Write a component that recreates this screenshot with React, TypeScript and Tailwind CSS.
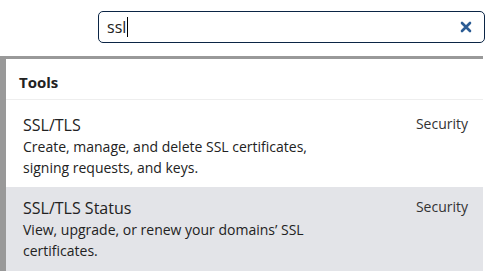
export default function App() {
  return (
    <div className="h-[271px] w-[485px] overflow-hidden bg-white font-['Open_Sans',sans-serif] text-[#222]">
      {/* Search */}
      <div className="flex h-[56px] items-start pl-[98px] pt-[11px]">
        <div className="flex h-[32px] flex-1 items-center rounded-[5px] border border-[#0b2545] pl-[8px] pr-[10px]">
          <span className="text-[16px] leading-none text-[#222]">ssl</span>
          <span className="ml-px h-[20px] w-px bg-black" />
          <span className="flex-1" />
          <svg width="12" height="12" viewBox="0 0 12 12" className="mr-[2px]">
            <path d="M2 2L10 10M10 2L2 10" stroke="#2c5c94" strokeWidth="2.6" strokeLinecap="round" />
          </svg>
        </div>
      </div>

      {/* Results panel */}
      <div className="mr-[2px] border-l-[6px] border-t-[3px] border-[#999] bg-white">
        <div className="border-b border-[#eee] px-[13px] pb-[9px] pt-[15px] text-[15px] font-bold leading-[16px]">
          Tools
        </div>

        <div className="flex justify-between pb-[9px] pl-[17px] pr-[15px] pt-[14px]">
          <div>
            <div className="text-[16px] leading-[22px]">SSL/TLS</div>
            <div className="w-[300px] text-[14px] leading-[21px]">
              Create, manage, and delete SSL certificates, signing requests, and keys.
            </div>
          </div>
          <div className="text-[14px] leading-[20px] text-[#333]">Security</div>
        </div>

        <div className="flex justify-between bg-[#e3e4e8] pb-[12px] pl-[17px] pr-[15px] pt-[10px]">
          <div>
            <div className="text-[16px] leading-[22px]">SSL/TLS Status</div>
            <div className="w-[300px] text-[14px] leading-[21px]">
              View, upgrade, or renew your domains’ SSL certificates.
            </div>
          </div>
          <div className="text-[14px] leading-[20px] text-[#333]">Security</div>
        </div>
      </div>
    </div>
  );
}
